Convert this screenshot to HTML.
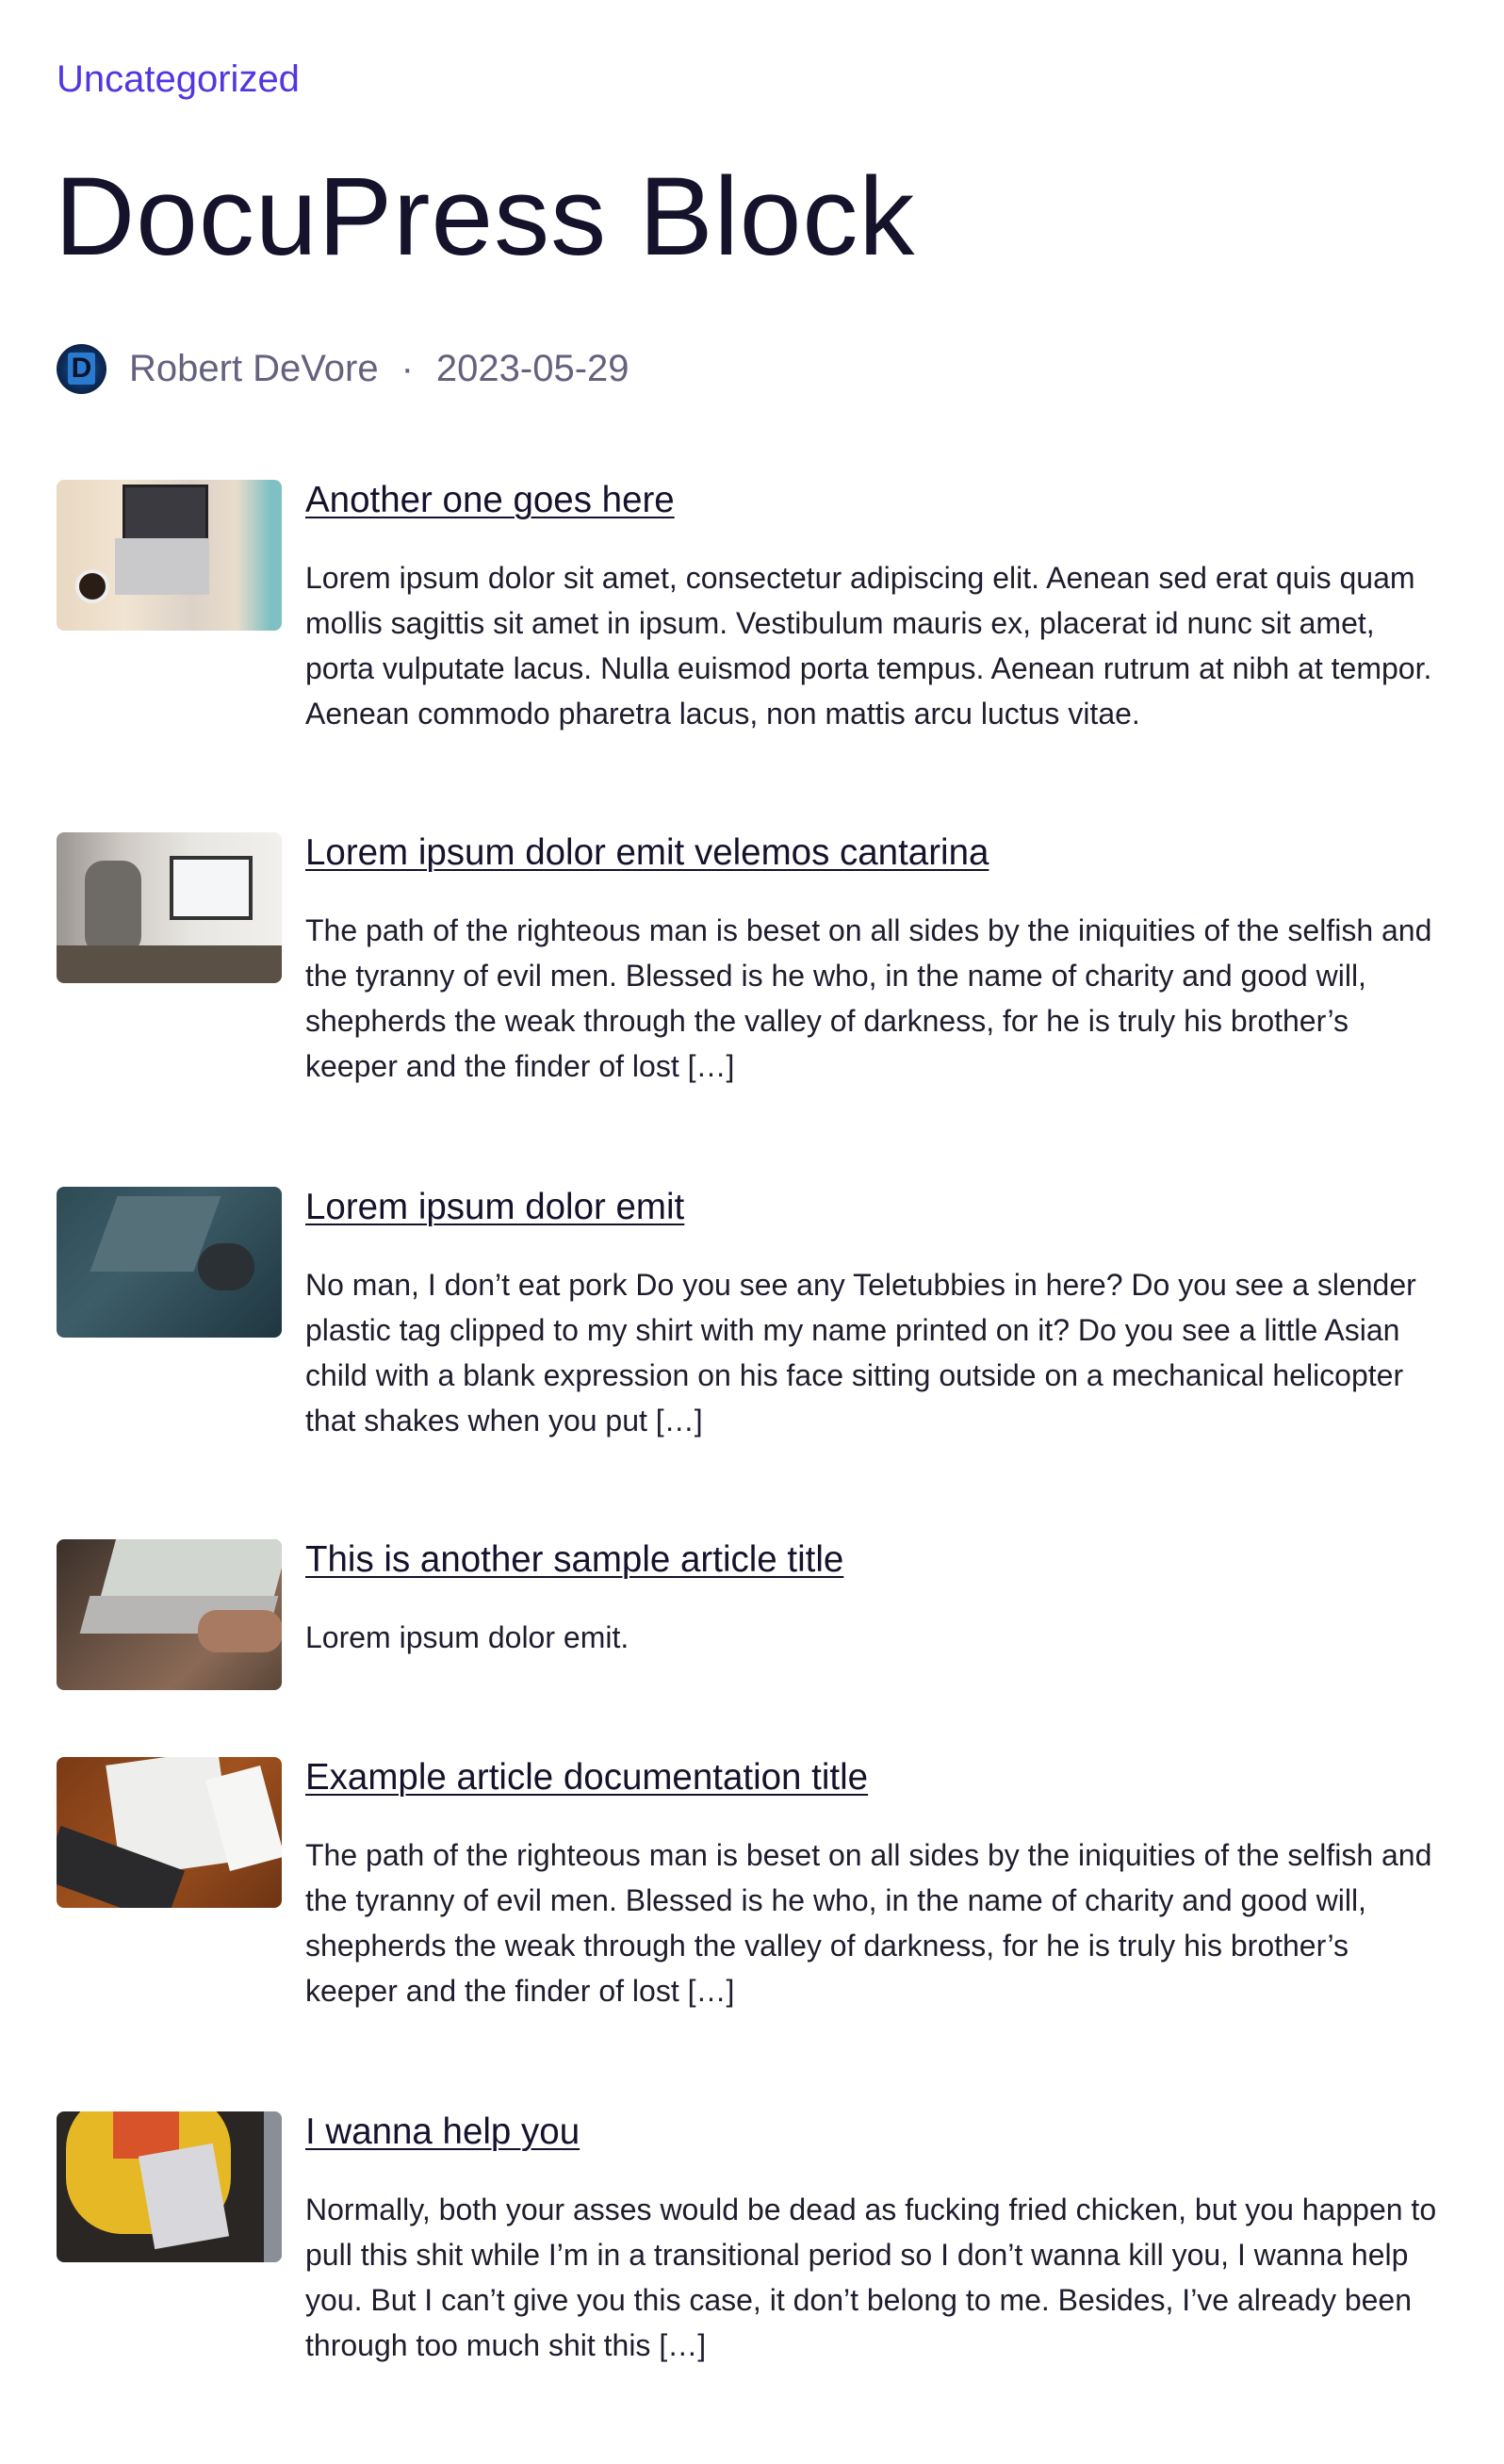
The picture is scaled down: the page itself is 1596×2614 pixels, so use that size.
<!DOCTYPE html>
<html><head><meta charset="utf-8">
<style>
html,body{margin:0;padding:0;background:#fff;}
body{width:1596px;height:2614px;position:relative;font-family:"Liberation Sans",Arial,sans-serif;color:#1b1a2e;overflow:hidden;}
.cat{position:absolute;left:60px;top:62px;font-size:40px;color:#5137e0;}
h1{position:absolute;left:58px;top:160px;margin:0;font-size:118px;font-weight:400;letter-spacing:1px;color:#15122b;line-height:140px;}
.meta{position:absolute;left:60px;top:364px;height:54px;display:flex;align-items:center;font-size:40px;color:#64627e;}
.av{width:53px;height:53px;border-radius:50%;background:radial-gradient(circle at 50% 50%,#1d5fa8 0,#0d2c5a 55%,#061428 100%);margin-right:24px;color:#0a1a33;font-weight:700;font-size:30px;display:flex;align-items:center;justify-content:center;}
.av span{background:#2a7ad0;color:#061428;padding:0 4px;border-radius:3px;}
.dot{margin:0 24px;}
.item{position:absolute;left:60px;width:1480px;}
.img{position:absolute;left:0;top:0;width:239px;height:160px;border-radius:8px;overflow:hidden;}
.txt{position:absolute;left:264px;top:0;white-space:nowrap;}
.t{font-size:38.5px;line-height:44px;text-decoration:underline;text-decoration-thickness:2px;text-underline-offset:5px;color:#15122b;}
.b{margin-top:36px;font-size:32px;line-height:48px;color:#1e1d2e;}
</style></head><body>
<div class="cat">Uncategorized</div>
<h1>DocuPress Block</h1>
<div class="meta"><div class="av"><span>D</span></div>Robert DeVore<span class="dot">·</span>2023-05-29</div>

<div class="item" style="top:509px">
<div class="img" style="background:linear-gradient(90deg,#e9d8c2 0,#f1e4d2 30%,#dcd2c8 60%,#e8dccb 80%,#7fc0c4 95%)"><div style="position:absolute;left:70px;top:5px;width:85px;height:55px;background:#3a3a40;border:3px solid #222"></div><div style="position:absolute;left:62px;top:62px;width:100px;height:60px;background:#c9c9cc"></div><div style="position:absolute;left:20px;top:95px;width:28px;height:28px;border-radius:50%;background:#2a1d16;border:4px solid #eee"></div></div>
<div class="txt"><div class="t">Another one goes here</div><div class="b">Lorem ipsum dolor sit amet, consectetur adipiscing elit. Aenean sed erat quis quam<br>mollis sagittis sit amet in ipsum. Vestibulum mauris ex, placerat id nunc sit amet,<br>porta vulputate lacus. Nulla euismod porta tempus. Aenean rutrum at nibh at tempor.<br>Aenean commodo pharetra lacus, non mattis arcu luctus vitae.</div></div>
</div>

<div class="item" style="top:883px">
<div class="img" style="background:linear-gradient(90deg,#9a9590 0,#cfcac4 30%,#e8e6e2 60%,#f2f0ec 100%)"><div style="position:absolute;left:120px;top:25px;width:80px;height:60px;background:#f4f6f8;border:4px solid #333"></div><div style="position:absolute;left:30px;top:30px;width:60px;height:100px;border-radius:20px;background:#6e6a66"></div><div style="position:absolute;left:0;top:120px;width:239px;height:40px;background:#5a5046"></div></div>
<div class="txt"><div class="t">Lorem ipsum dolor emit velemos cantarina</div><div class="b">The path of the righteous man is beset on all sides by the iniquities of the selfish and<br>the tyranny of evil men. Blessed is he who, in the name of charity and good will,<br>shepherds the weak through the valley of darkness, for he is truly his brother’s<br>keeper and the finder of lost […]</div></div>
</div>

<div class="item" style="top:1259px">
<div class="img" style="background:linear-gradient(135deg,#2e4b55 0,#3d5d68 40%,#1f3640 100%)"><div style="position:absolute;left:50px;top:10px;width:110px;height:80px;background:#56707a;transform:skewX(-20deg)"></div><div style="position:absolute;left:150px;top:60px;width:60px;height:50px;border-radius:25px;background:#2a3034"></div></div>
<div class="txt"><div class="t">Lorem ipsum dolor emit</div><div class="b">No man, I don’t eat pork Do you see any Teletubbies in here? Do you see a slender<br>plastic tag clipped to my shirt with my name printed on it? Do you see a little Asian<br>child with a blank expression on his face sitting outside on a mechanical helicopter<br>that shakes when you put […]</div></div>
</div>

<div class="item" style="top:1633px">
<div class="img" style="background:linear-gradient(135deg,#3a302a 0,#6a5244 40%,#8a6a56 70%,#5a4538 100%)"><div style="position:absolute;left:55px;top:0;width:184px;height:60px;background:#d2d6d0;transform:skewX(-15deg)"></div><div style="position:absolute;left:30px;top:60px;width:200px;height:40px;background:#b8b6b4;transform:skewX(-15deg)"></div><div style="position:absolute;left:150px;top:75px;width:90px;height:45px;border-radius:20px;background:#a87a62"></div></div>
<div class="txt"><div class="t">This is another sample article title</div><div class="b">Lorem ipsum dolor emit.</div></div>
</div>

<div class="item" style="top:1864px">
<div class="img" style="background:linear-gradient(135deg,#7a3a16 0,#a0521e 50%,#6e3414 100%)"><div style="position:absolute;left:60px;top:0;width:120px;height:120px;background:#eeeeec;transform:rotate(-8deg)"></div><div style="position:absolute;left:170px;top:15px;width:60px;height:100px;background:#f6f6f4;transform:rotate(-15deg)"></div><div style="position:absolute;left:-10px;top:95px;width:140px;height:60px;background:#2a2a2c;transform:rotate(20deg)"></div></div>
<div class="txt"><div class="t">Example article documentation title</div><div class="b">The path of the righteous man is beset on all sides by the iniquities of the selfish and<br>the tyranny of evil men. Blessed is he who, in the name of charity and good will,<br>shepherds the weak through the valley of darkness, for he is truly his brother’s<br>keeper and the finder of lost […]</div></div>
</div>

<div class="item" style="top:2240px">
<div class="img" style="background:#2a2624"><div style="position:absolute;left:10px;top:-20px;width:175px;height:150px;border-radius:60px;background:#e6b825"></div><div style="position:absolute;left:60px;top:0;width:70px;height:50px;background:#d9532a"></div><div style="position:absolute;left:95px;top:40px;width:80px;height:100px;background:#d8d8dc;transform:rotate(-10deg)"></div><div style="position:absolute;left:220px;top:0;width:19px;height:160px;background:#8a8e96"></div></div>
<div class="txt"><div class="t">I wanna help you</div><div class="b">Normally, both your asses would be dead as fucking fried chicken, but you happen to<br>pull this shit while I’m in a transitional period so I don’t wanna kill you, I wanna help<br>you. But I can’t give you this case, it don’t belong to me. Besides, I’ve already been<br>through too much shit this […]</div></div>
</div>
</body></html>
